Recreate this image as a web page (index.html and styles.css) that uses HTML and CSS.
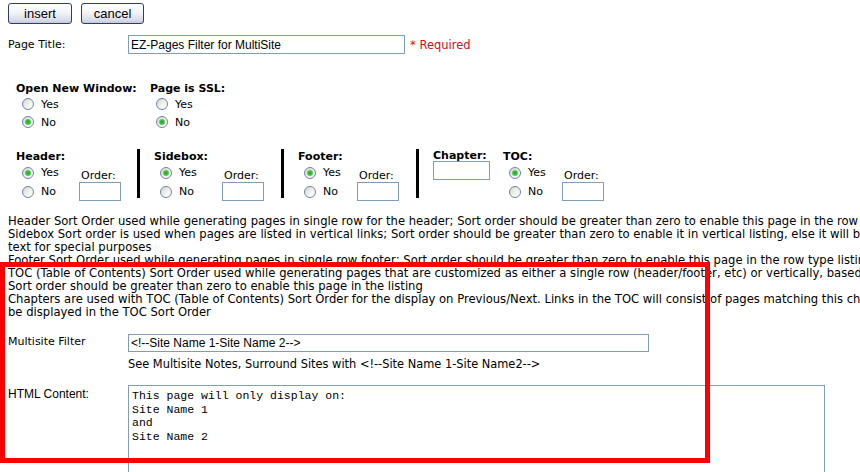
FILE: index.html
```html
<!DOCTYPE html>
<html>
<head>
<meta charset="utf-8">
<title>EZ-Pages</title>
<link rel="stylesheet" href="styles.css">
</head>
<body>
<div class="page">
  <div class="toolbar">
    <button class="btn btn-insert">insert</button>
    <button class="btn btn-cancel">cancel</button>
  </div>

  <div class="field title-row">
    <span class="field-label">Page Title:</span>
    <input class="text-input title-input" type="text" value="EZ-Pages Filter for MultiSite">
    <span class="required">* Required</span>
  </div>

  <div class="flags">
    <div class="flag flag-window">
      <div class="group-label">Open New Window:</div>
      <label class="opt opt-short"><input type="radio" class="radio" name="nw"> Yes</label>
      <label class="opt opt-short"><input type="radio" class="radio" name="nw" checked> No</label>
    </div>
    <div class="flag flag-ssl">
      <div class="group-label">Page is SSL:</div>
      <label class="opt opt-short"><input type="radio" class="radio" name="ssl"> Yes</label>
      <label class="opt opt-short"><input type="radio" class="radio" name="ssl" checked> No</label>
    </div>
  </div>

  <div class="sections">
    <div class="sec sec-header">
      <div class="group-label">Header:</div>
      <div class="sec-body">
        <div class="radios radios-header">
          <label class="opt"><input type="radio" class="radio" name="hd" checked> Yes</label>
          <label class="opt"><input type="radio" class="radio" name="hd"> No</label>
        </div>
        <div class="order"><span class="order-label">Order:</span><input class="text-input order-input" type="text"></div>
      </div>
    </div>
    <div class="vbar"></div>
    <div class="sec sec-sidebox">
      <div class="group-label">Sidebox:</div>
      <div class="sec-body">
        <div class="radios radios-sidebox">
          <label class="opt"><input type="radio" class="radio" name="sb" checked> Yes</label>
          <label class="opt"><input type="radio" class="radio" name="sb"> No</label>
        </div>
        <div class="order"><span class="order-label">Order:</span><input class="text-input order-input" type="text"></div>
      </div>
    </div>
    <div class="vbar"></div>
    <div class="sec sec-footer">
      <div class="group-label">Footer:</div>
      <div class="sec-body">
        <div class="radios radios-footer">
          <label class="opt"><input type="radio" class="radio" name="ft" checked> Yes</label>
          <label class="opt"><input type="radio" class="radio" name="ft"> No</label>
        </div>
        <div class="order"><span class="order-label">Order:</span><input class="text-input order-input" type="text"></div>
      </div>
    </div>
    <div class="vbar"></div>
    <div class="sec sec-chapter">
      <div class="group-label chapter-label">Chapter:</div>
      <input class="text-input chapter-input" type="text">
    </div>
    <div class="sec sec-toc">
      <div class="group-label">TOC:</div>
      <div class="sec-body">
        <div class="radios radios-toc">
          <label class="opt"><input type="radio" class="radio" name="toc" checked> Yes</label>
          <label class="opt"><input type="radio" class="radio" name="toc"> No</label>
        </div>
        <div class="order"><span class="order-label">Order:</span><input class="text-input order-input" type="text"></div>
      </div>
    </div>
  </div>

  <div class="explain">
    <p>Header Sort Order used while generating pages in single row for the header; Sort order should be greater than zero to enable this page in the row type listing</p>
    <p>Sidebox Sort order is used when pages are listed in vertical links; Sort order should be greater than zero to enable it in vertical listing, else it will be used as<br>text for special purposes</p>
    <p>Footer Sort Order used while generating pages in single row footer; Sort order should be greater than zero to enable this page in the row type listing</p>
    <p>TOC (Table of Contents) Sort Order used while generating pages that are customized as either a single row (header/footer, etc) or vertically, based on needs.<br>Sort order should be greater than zero to enable this page in the listing</p>
    <p>Chapters are used with TOC (Table of Contents) Sort Order for the display on Previous/Next. Links in the TOC will consist of pages matching this chapter and will<br>be displayed in the TOC Sort Order</p>
  </div>

  <div class="field multisite-row">
    <span class="field-label">Multisite Filter</span>
    <div class="field-main">
      <input class="text-input multisite-input" type="text" value="&lt;!--Site Name 1-Site Name 2--&gt;">
      <div class="help">See Multisite Notes, Surround Sites with &lt;!--Site Name 1-Site Name2--&gt;</div>
    </div>
  </div>

  <div class="field content-row">
    <span class="field-label content-label">HTML Content:</span>
    <textarea class="content-area">This page will only display on:
Site Name 1
and
Site Name 2</textarea>
  </div>
</div>
<div class="highlight"></div>
</body>
</html>
```

FILE: styles.css
```css
html, body {
  margin: 0;
  padding: 0;
  overflow: hidden;
  background: #fff;
}
body {
  width: 860px;
  height: 472px;
  position: relative;
  font-family: "DejaVu Sans", Verdana, sans-serif;
  font-size: 11px;
  color: #000;
}
.page {
  padding: 0 8px;
}
.toolbar {
  display: flex;
  gap: 9px;
  padding-top: 3px;
}
.btn {
  box-sizing: border-box;
  width: 64px;
  height: 21px;
  padding: 0;
  border: 1px solid #2b3f63;
  border-radius: 3px;
  background: linear-gradient(#ffffff 0%, #f3f4f8 45%, #d9dce8 85%, #c3c8d9 100%);
  font-family: "Liberation Sans", Arial, sans-serif;
  font-size: 13px;
  color: #000;
  line-height: 19px;
}
.btn-cancel {
  width: 63px;
}
.field {
  display: flex;
  align-items: flex-start;
}
.field-label {
  width: 120px;
  flex: none;
  line-height: 13px;
}
.title-row {
  margin-top: 11px;
  align-items: center;
}
.text-input {
  box-sizing: border-box;
  border: 1px solid #7f9db9;
  background: #fff;
  margin: 0;
  padding: 0 2px;
  font-family: "Liberation Sans", Arial, sans-serif;
  font-size: 12px;
  color: #000;
  outline: none;
}
.title-input {
  width: 277px;
  height: 19px;
}
.required {
  margin-left: 5px;
  color: #cc1122;
  font-size: 11.5px;
}
.group-label {
  font-weight: bold;
  line-height: 13px;
}
.flags {
  display: flex;
  margin-top: 28px;
  padding-left: 8px;
}
.flag-window {
  width: 134px;
}
.opt {
  display: flex;
  align-items: center;
  height: 19px;
  padding-left: 6px;
  gap: 7px;
}
.opt-short {
  height: 18px;
}
.radio {
  appearance: none;
  -webkit-appearance: none;
  box-sizing: border-box;
  width: 12px;
  height: 12px;
  margin: 0;
  border: 1px solid #6d84a3;
  border-radius: 50%;
  background: linear-gradient(135deg, #d6d6d0 0%, #f2f2ee 55%, #ffffff 100%);
  flex: none;
}
.radio:checked {
  background:
    radial-gradient(circle at 50% 50%, #1ea41e 0, #3cc23c 2px, #8ad88a 3px, rgba(255,255,255,0) 3.6px),
    linear-gradient(135deg, #d6d6d0 0%, #f2f2ee 55%, #ffffff 100%);
}
.sections {
  display: flex;
  align-items: flex-start;
  margin-top: 19px;
  padding-left: 8px;
}
.sec-body {
  display: flex;
}
.radios {
  width: 63px;
  flex: none;
}
.radios-sidebox { width: 68px; }
.radios-footer { width: 59px; }
.radios-toc { width: 59px; }
.order {
  padding-top: 7px;
  display: flex;
  flex-direction: column;
}
.order-label {
  line-height: 12px;
  padding-left: 2px;
}
.order-input {
  width: 42px;
  height: 19px;
}
.sec-header { width: 121px; }
.sec-sidebox { width: 127px; }
.sec-footer { width: 118px; }
.sec-chapter { width: 70px; }
.chapter-label {
  margin-top: -1px;
  margin-bottom: -1px;
}
.chapter-input {
  width: 57px;
  height: 19px;
  display: block;
}
.vbar {
  width: 3px;
  height: 49px;
  background: #000;
  margin-top: -1px;
  margin-right: 14px;
  flex: none;
}
.explain {
  margin-top: 14px;
  font-size: 11.6px;
  line-height: 13px;
  white-space: nowrap;
}
.explain p {
  margin: 0;
}
.multisite-row {
  margin-top: 15px;
}
.multisite-row .field-label {
  line-height: 14px;
  padding-top: 1px;
}
.multisite-input {
  width: 521px;
  height: 18px;
  display: block;
}
.help {
  margin-top: 6px;
  font-size: 11.4px;
  line-height: 13px;
}
.content-row {
  margin-top: 14px;
}
.content-label {
  font-family: "Liberation Sans", Arial, sans-serif;
  font-size: 12px;
  line-height: 14px;
  padding-top: 2px;
}
.content-area {
  box-sizing: border-box;
  width: 697px;
  height: 300px;
  margin: 0;
  border: 1px solid #7f9db9;
  padding: 3px 3px;
  font-family: "Liberation Mono", "Courier New", monospace;
  font-size: 11.5px;
  line-height: 13.5px;
  color: #000;
  resize: none;
  outline: none;
}
.highlight {
  position: absolute;
  left: 0;
  top: 262px;
  width: 710px;
  height: 201px;
  box-sizing: border-box;
  border: 5px solid #ff0000;
  pointer-events: none;
}
```
